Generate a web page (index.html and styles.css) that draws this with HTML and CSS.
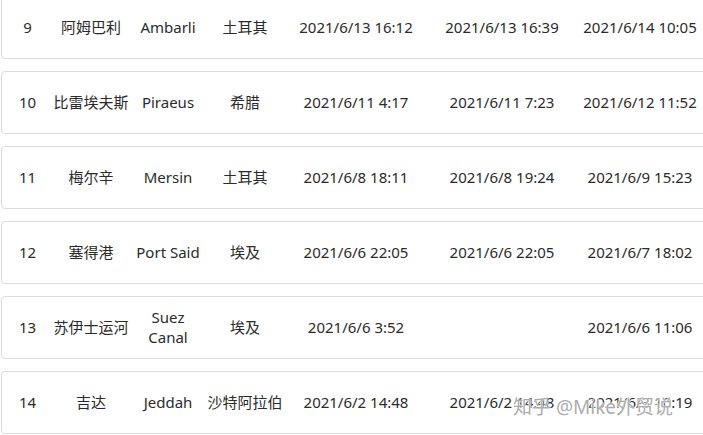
FILE: index.html
```html
<!DOCTYPE html>
<html lang="zh-CN">
<head>
<meta charset="utf-8">
<link rel="stylesheet" href="styles.css">
</head>
<body>
<div class="table">
  <div class="row"><div class="c">9</div><div class="c">阿姆巴利</div><div class="c en">Ambarli</div><div class="c">土耳其</div><div class="c">2021/6/13 16:12</div><div class="c">2021/6/13 16:39</div><div class="c">2021/6/14 10:05</div></div>
  <div class="row"><div class="c">10</div><div class="c">比雷埃夫斯</div><div class="c en">Piraeus</div><div class="c">希腊</div><div class="c">2021/6/11 4:17</div><div class="c">2021/6/11 7:23</div><div class="c">2021/6/12 11:52</div></div>
  <div class="row"><div class="c">11</div><div class="c">梅尔辛</div><div class="c en">Mersin</div><div class="c">土耳其</div><div class="c">2021/6/8 18:11</div><div class="c">2021/6/8 19:24</div><div class="c">2021/6/9 15:23</div></div>
  <div class="row"><div class="c">12</div><div class="c">塞得港</div><div class="c en">Port Said</div><div class="c">埃及</div><div class="c">2021/6/6 22:05</div><div class="c">2021/6/6 22:05</div><div class="c">2021/6/7 18:02</div></div>
  <div class="row"><div class="c">13</div><div class="c">苏伊士运河</div><div class="c en">Suez Canal</div><div class="c">埃及</div><div class="c">2021/6/6 3:52</div><div class="c"></div><div class="c">2021/6/6 11:06</div></div>
  <div class="row"><div class="c">14</div><div class="c">吉达</div><div class="c en">Jeddah</div><div class="c">沙特阿拉伯</div><div class="c">2021/6/2 14:48</div><div class="c">2021/6/2 14:48</div><div class="c">2021/6/3 10:19</div></div>
</div>
<div class="watermark">知乎 @Mike外贸说</div>
</body>
</html>
```

FILE: styles.css
```css
html, body {
  margin: 0;
  padding: 0;
  background: #ffffff;
  overflow: hidden;
  width: 703px;
  height: 435px;
}
body {
  position: relative;
  font-family: "Noto Sans", "Noto Sans CJK SC", sans-serif;
  font-size: 15px;
  color: #2b2b2b;
}
.table {
  display: flex;
  flex-direction: column;
  gap: 12px;
  margin-top: -4px;
  margin-left: 1px;
}
.row {
  width: 720px;
  height: 59px;
  padding-bottom: 2px;
  border: 1px solid #dcdcdc;
  border-radius: 4px;
  display: grid;
  grid-template-columns: 51px 76px 78px 76px 146px 146px 130px;
  align-items: center;
}
.c {
  text-align: center;
  line-height: 20px;
  white-space: nowrap;
}
.en {
  padding: 0 5px;
  white-space: normal;
}
.watermark {
  position: absolute;
  left: 513px;
  top: 392px;
  font-size: 19px;
  color: rgba(150, 150, 150, 0.8);
  text-shadow: 0 0 2px #fff, 0 0 2px #fff, 0 0 1px #fff;
  white-space: nowrap;
}
```
